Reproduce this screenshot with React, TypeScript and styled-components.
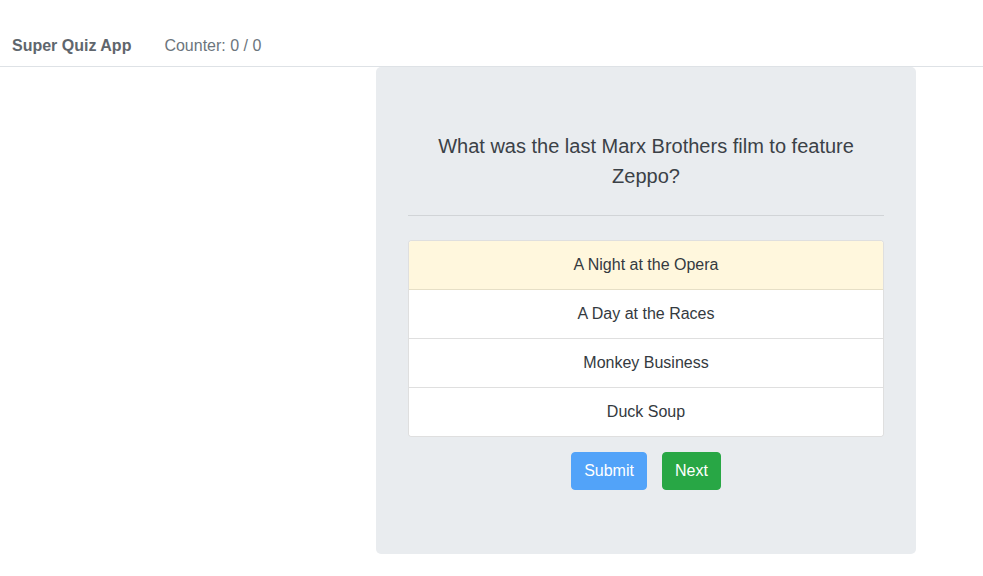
import { FC, useState } from "react";
import styled, { createGlobalStyle } from "styled-components";

const GlobalStyle = createGlobalStyle`
  * {
    box-sizing: border-box;
  }
  body {
    margin: 0;
    background: #fff;
    font-family: "Liberation Sans", Arial, sans-serif;
    color: #343a40;
  }
`;

const NavBar = styled.nav`
  display: flex;
  align-items: center;
  height: 67px;
  padding: 26px 12px 0;
  border-bottom: 1px solid #dee2e6;
`;

const Brand = styled.span`
  font-size: 16px;
  font-weight: bold;
  color: #5f666d;
  margin-right: 33px;
`;

const NavText = styled.span`
  font-size: 16px;
  color: #6c757d;
`;

const Main = styled.main`
  display: flex;
  padding-left: 376px;
`;

const Jumbotron = styled.section`
  width: 540px;
  background: #e9ecef;
  border-radius: 5px;
  padding: 64px 32px;
`;

const Question = styled.h2`
  margin: 0;
  font-size: 20px;
  font-weight: normal;
  line-height: 30px;
  text-align: center;
  color: #3b4147;
`;

const Divider = styled.hr`
  margin: 24px 0;
  border: 0;
  border-top: 1px solid #d1d4d7;
`;

const AnswerList = styled.ul`
  list-style: none;
  margin: 0;
  padding: 0;
  border: 1px solid rgba(0, 0, 0, 0.125);
  border-radius: 4px;
  overflow: hidden;
  background: #fff;
`;

const Answer = styled.li<{ $selected?: boolean }>`
  padding: 12px 20px;
  font-size: 16px;
  line-height: 24px;
  text-align: center;
  color: #343a40;
  cursor: pointer;
  background: ${(p) => (p.$selected ? "#fff7dd" : "#fff")};
  & + & {
    border-top: 1px solid ${(p) => (p.$selected ? "#e8dfbf" : "rgba(0, 0, 0, 0.125)")};
  }
  &:first-child + & {
    border-top-color: #e6dfc6;
  }
`;

const Actions = styled.div`
  display: flex;
  justify-content: center;
  gap: 15px;
  margin-top: 15px;
`;

const Button = styled.button<{ $variant: "primary" | "success" }>`
  font-family: inherit;
  font-size: 16px;
  line-height: 24px;
  padding: 6px 12px;
  border: 1px solid transparent;
  border-radius: 4px;
  color: #fff;
  cursor: pointer;
  background: ${(p) => (p.$variant === "primary" ? "#52a3f9" : "#28a745")};
  border-color: ${(p) => (p.$variant === "primary" ? "#52a3f9" : "#28a745")};
`;

const answers = [
  "A Night at the Opera",
  "A Day at the Races",
  "Monkey Business",
  "Duck Soup",
];

const App: FC = () => {
  const [selected, setSelected] = useState(0);
  return (
    <>
      <GlobalStyle />
      <NavBar>
        <Brand>Super Quiz App</Brand>
        <NavText>Counter: 0 / 0</NavText>
      </NavBar>
      <Main>
        <Jumbotron>
          <Question>
            What was the last Marx Brothers film to feature Zeppo?
          </Question>
          <Divider />
          <AnswerList>
            {answers.map((a, i) => (
              <Answer key={a} $selected={i === selected} onClick={() => setSelected(i)}>
                {a}
              </Answer>
            ))}
          </AnswerList>
          <Actions>
            <Button $variant="primary">Submit</Button>
            <Button $variant="success">Next</Button>
          </Actions>
        </Jumbotron>
      </Main>
    </>
  );
};

export default App;
